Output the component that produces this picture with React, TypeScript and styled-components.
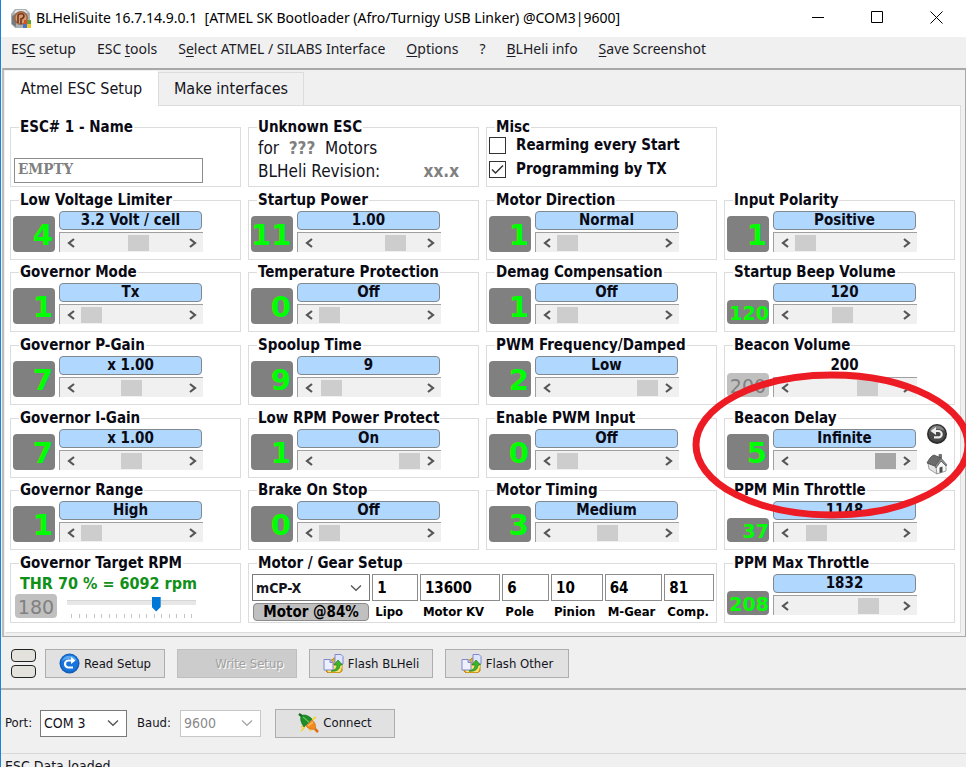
import React, { useState } from 'react';
import styled, { createGlobalStyle } from 'styled-components';

const UI = `"Noto Sans", "Open Sans", sans-serif`;
const TAHOMA = `"DejaVu Sans Condensed", "DejaVu Sans", sans-serif`;
const condensed = `font-family: ${TAHOMA};`;

const GlobalStyle = createGlobalStyle`
  *, *::before, *::after { box-sizing: border-box; }
  body { margin: 0; background: #f0f0f0; color: #000; font-family: ${UI}; }
  button, input, select { font: inherit; color: inherit; margin: 0; border-radius: 0; }
`;

const Window = styled.div`
  display: flex;
  flex-direction: column;
  height: 100vh;
  overflow: hidden;
  background: #f0f0f0;
  border-left: 1px solid #1883d7;
`;

const TitleBar = styled.header`
  display: flex;
  align-items: center;
  flex: 0 0 37px;
  padding: 0 0 2px 10px;
  background: #fff;
`;

const Title = styled.h1`
  flex: 1;
  margin: 0 0 0 5px;
  font-size: 14px;
  line-height: 20px;
  font-weight: 400;
  white-space: pre;
`;

const CaptionButton = styled.button`
  display: grid;
  place-items: center;
  width: 59px;
  height: 35px;
  padding: 0;
  border: 0;
  background: transparent;
`;

const MenuBar = styled.nav`
  display: flex;
  flex: 0 0 31px;
  gap: 21px;
  padding: 1px 10px 0;
`;

const MenuItem = styled.button`
  height: 21px;
  padding: 0;
  border: 0;
  background: transparent;
  font-size: 14px;
  line-height: 21px;
  color: #1c1c28;
  white-space: nowrap;
  u { text-underline-offset: 2px; }
`;

const Panel = styled.section`
  flex: none;
  border: solid #a8a8a8;
  border-width: 2px 1px 1px 0;
  border-left: 2px solid #bdbdbd;
  margin-left: 1px;
`;

const TabStrip = styled.div`
  display: flex;
  align-items: flex-end;
  height: 35px;
  padding-left: 1px;
`;

const Tab = styled.button<{ $active?: boolean }>`
  ${condensed}
  height: ${p => (p.$active ? 35 : 33)}px;
  width: ${p => (p.$active ? 153 : 146)}px;
  margin-bottom: ${p => (p.$active ? -1 : 0)}px;
  padding: 0;
  font-size: 16px;
  line-height: 20px;
  color: #14141c;
  background: ${p => (p.$active ? '#fff' : '#f0f0f0')};
  border: solid #dcdcdc;
  border-width: ${p => (p.$active ? '0' : '1px 1px 0 1px')};
`;

const TabPage = styled.div`
  margin: 0 4px 3px 1px;
  padding: 13px 5px 9px 4px;
  background: #fff;
  border: 1px solid #dcdcdc;
  border-left-color: #fff;
`;

const Settings = styled.div`
  display: grid;
  grid-template-columns: repeat(4, minmax(0, 1fr));
  grid-template-rows: 73px 72px 73px 73px 72px 73px 68px;
  column-gap: 7px;
  align-items: start;
`;

const Group = styled.fieldset<{ $col: number; $row: number; $span?: number }>`
  grid-column: ${p => p.$col} / span ${p => p.$span ?? 1};
  grid-row: ${p => p.$row};
  min-width: 0;
  height: 68px;
  margin: 0;
  padding: 0 2px;
  border: 1px solid #dcdcdc;
`;

const Legend = styled.legend`
  ${condensed}
  height: 16px;
  margin-left: 6px;
  padding: 0 1px;
  font-size: 15px;
  line-height: 16px;
  font-weight: 700;
  white-space: nowrap;
  color: #0a0a14;
`;

const ParamBody = styled.div`
  position: relative;
  display: grid;
  grid-template-columns: 42px minmax(0, 144px) auto;
  grid-template-rows: 41px;
  column-gap: 4px;
  padding-top: 3px;
  align-items: end;
`;

const Badge = styled.output<{ $small?: boolean; $off?: boolean }>`
  display: block;
  height: ${p => (p.$small ? 24 : 36)}px;
  width: 42px;
  padding-right: ${p => (p.$small ? 0 : 2)}px;
  border-radius: 4px;
  overflow: hidden;
  background: ${p => (p.$off ? '#c0c0c0' : '#808080')};
  color: ${p => (p.$off ? '#808080' : '#00ff00')};
  font-family: "DejaVu Sans", sans-serif;
  font-size: ${p => (p.$small ? 19 : 29)}px;
  font-weight: ${p => (p.$off ? 400 : 700)};
  line-height: ${p => (p.$small ? 26 : 38)}px;
  text-align: ${p => (p.$off ? 'center' : 'right')};
`;

const Control = styled.div`
  display: grid;
  grid-template-rows: 19px 20px;
  row-gap: 2px;
`;

const Pill = styled.output<{ $plain?: boolean }>`
  ${condensed}
  margin-right: 1px;
  border: 1px solid ${p => (p.$plain ? 'transparent' : '#808890')};
  border-radius: 4px;
  background: ${p => (p.$plain ? 'transparent' : '#b0d8ff')};
  font-size: 15px;
  line-height: 17px;
  font-weight: 700;
  text-align: center;
  color: #0a0a14;
`;

const ScrollFrame = styled.div`
  display: grid;
  grid-template-columns: 21px minmax(0, 1fr) 21px;
  border: solid #a0a0a0;
  border-width: 1px 0 0 1px;
  background: #f0f0f0;
`;

const ArrowButton = styled.button`
  display: grid;
  place-items: center;
  padding: 0;
  border: 0;
  background: transparent;
`;

const ScrollRange = styled.input<{ $held?: boolean }>`
  appearance: none;
  width: 100%;
  height: 19px;
  background: transparent;
  &::-webkit-slider-thumb {
    appearance: none;
    width: 21px;
    height: 16px;
    border: 0;
    border-radius: 0;
    background: ${p => (p.$held ? '#a6a6a6' : '#cdcdcd')};
  }
`;

const SideButtons = styled.div`
  display: flex;
  flex-direction: column;
  gap: 8px;
  margin: 0 0 -5px 5px;
`;

const IconButton = styled.button`
  display: block;
  width: 22px;
  height: 22px;
  padding: 0;
  border: 0;
  background: transparent;
  svg { display: block; }
`;

const Callout = styled.svg`
  position: absolute;
  z-index: 2;
  left: -35px;
  top: -58px;
  pointer-events: none;
`;

const NameInput = styled.input`
  display: block;
  width: 189px;
  height: 25px;
  margin: 23px 0 0 1px;
  padding: 0 3px 4px;
  border: 1px solid #8c8c8c;
  background: #fff;
  font-family: "DejaVu Serif Condensed", "DejaVu Serif", serif;
  font-size: 15px;
  font-weight: 700;
  color: #808080;
`;

const InfoLine = styled.p`
  ${condensed}
  display: flex;
  justify-content: space-between;
  width: 201px;
  margin: 0 0 0 7px;
  padding-top: 3px;
  font-size: 17px;
  line-height: 20px;
  white-space: pre;
  color: #14141c;
  b { color: #808080; }
`;

const CheckRow = styled.label`
  ${condensed}
  display: flex;
  align-items: center;
  gap: 10px;
  height: 24px;
  font-size: 15px;
  line-height: 20px;
  font-weight: 700;
  color: #0a0a14;
`;

const CheckList = styled.div`
  margin-top: -2px;
`;

const CheckCell = styled.span`
  display: grid;
  width: 17px;
  height: 17px;
  > * { grid-area: 1 / 1; }
  svg { pointer-events: none; opacity: 0; }
  input:checked + svg { opacity: 1; }
`;

const CheckBox = styled.input`
  appearance: none;
  width: 17px;
  height: 17px;
  border: 1px solid #333;
  background: #fff;
`;

const Reading = styled.p`
  ${condensed}
  margin: 3px 0 0 7px;
  font-size: 16px;
  line-height: 20px;
  font-weight: 700;
  color: #109018;
  white-space: nowrap;
`;

const TargetRow = styled.div`
  display: flex;
  gap: 10px;
  padding: 0 0 0 2px;
`;

const SliderBox = styled.div`
  width: 129px;
  padding-top: 2px;
`;

const Slider = styled.input`
  appearance: none;
  display: block;
  width: 100%;
  height: 16px;
  background: linear-gradient(#d6d6d6, #d6d6d6) 0 4px / 100% 1px no-repeat,
    linear-gradient(#e7e7e7, #e7e7e7) 0 4px / 100% 5px no-repeat;
  &::-webkit-slider-thumb {
    appearance: none;
    width: 9px;
    height: 15px;
    background: #0078d7;
    clip-path: polygon(0 0, 100% 0, 100% 70%, 50% 100%, 0 70%);
  }
`;

const Ticks = styled.div`
  display: flex;
  justify-content: space-between;
  margin: 2px 4px 0;
`;

const Tick = styled.i`
  width: 1px;
  height: 4px;
  background: #c4c4c4;
`;

const MotorGrid = styled.div`
  display: grid;
  grid-auto-flow: column;
  grid-template-columns: 119fr 46fr 81fr 47fr 52fr 58fr 50fr;
  grid-template-rows: 27px 18px;
  gap: 2px;
  margin: 3px 0 0 1px;
`;

const MotorInput = styled.input`
  ${condensed}
  width: 100%;
  min-width: 0;
  padding: 0 4px;
  border: 1px solid #8c8c8c;
  background: #fff;
  font-size: 15px;
  font-weight: 700;
`;

const MotorLabel = styled.label`
  ${condensed}
  padding-left: 3px;
  font-size: 13px;
  line-height: 18px;
  font-weight: 700;
  white-space: nowrap;
`;

const MotorButton = styled.button`
  ${condensed}
  margin: 0 1px;
  padding: 0;
  border: 1px solid #8c8c8c;
  border-radius: 4px;
  background: #c0c0c0;
  font-size: 15px;
  line-height: 16px;
  font-weight: 700;
  white-space: nowrap;
`;

const SelectBox = styled.span<{ $w?: number; $disabled?: boolean }>`
  display: grid;
  grid-template-columns: minmax(0, 1fr) 20px;
  align-items: center;
  width: ${p => (p.$w ? p.$w + 'px' : 'auto')};
  height: 27px;
  color: ${p => (p.$disabled ? '#a8a8a8' : '#555')};
  select { grid-area: 1 / 1 / 2 / 3; }
  svg { grid-area: 1 / 2; pointer-events: none; }
`;

const Select = styled.select<{ $bold?: boolean }>`
  ${condensed}
  appearance: none;
  width: 100%;
  height: 27px;
  padding: 0 3px;
  border: 1px solid #7a7a7a;
  background: #fff;
  color: #14141c;
  font-size: 14px;
  font-weight: ${p => (p.$bold ? 700 : 400)};
  &:disabled { border-color: #c8c8c8; opacity: 1; color: #8a8a8a; }
`;

const Toolbar = styled.div`
  display: flex;
  align-items: flex-start;
  gap: 12px;
  flex: 0 0 53px;
  padding: 12px 9px 0;
  border-bottom: 2px solid #b4b4b4;
`;

const Lamps = styled.div`
  display: grid;
  gap: 3px;
  margin: 0 -3px 0 1px;
`;

const Lamp = styled.button`
  width: 25px;
  height: 13px;
  padding: 0;
  border: 1px solid #222;
  border-radius: 4px;
  background: #e3e2dc;
`;

const PushButton = styled.button<{ $w: number }>`
  ${condensed}
  display: flex;
  align-items: center;
  justify-content: center;
  gap: 4px;
  width: ${p => p.$w}px;
  height: 29px;
  padding: 0;
  border: 1px solid #adadad;
  background: #e1e1e1;
  font-size: 13px;
  line-height: 18px;
  white-space: nowrap;
  color: #14141c;
  &:disabled {
    padding-left: 25px;
    border-color: #bfbfbf;
    background: #cccccc;
    color: #a0a0a0;
    text-shadow: 1px 1px 0 #fff;
  }
`;

const PortBar = styled.div`
  display: flex;
  align-items: center;
  flex: 0 0 63px;
  padding: 3px 4px 0;
`;

const PortLabel = styled.label<{ $gap?: boolean }>`
  ${condensed}
  width: ${p => (p.$gap ? 53 : 35)}px;
  padding-left: ${p => (p.$gap ? 10 : 0)}px;
  font-size: 13px;
  line-height: 18px;
  color: #14141c;
`;

const ConnectSlot = styled.div`
  margin-left: 14px;
`;

const StatusBar = styled.footer`
  ${condensed}
  flex: none;
  padding: 2px 4px;
  border-top: 1px solid #d7d7d7;
  font-size: 14px;
  line-height: 20px;
  color: #14141c;
`;

const Chevron = () => (
  <svg width="12" height="8" viewBox="0 0 12 8" fill="none" stroke="currentColor" strokeWidth="1.3" aria-hidden="true">
    <path d="M1 1.5 6 6.3 11 1.5" />
  </svg>
);

const Arrow = ({ right }: { right?: boolean }) => (
  <svg width="8" height="10" viewBox="0 0 8 10" fill="none" stroke="#555" strokeWidth="2.2" aria-hidden="true">
    <path d={right ? 'M1 1 6 5 1 9' : 'M7 1 2 5 7 9'} />
  </svg>
);

const AppIcon = () => (
  <svg width="20" height="20" viewBox="0 0 20 20" aria-hidden="true">
    <path d="M4 1h11l4 4v13l-3 2H4l-4-4V6z" fill="#a9b1b5" />
    <path d="M5 2h9l3 3H3z" fill="#dfe5e6" />
    <path d="M1 8v8l4 3V6z" fill="#757c80" />
    <circle cx="10" cy="10" r="7" fill="#9b6240" />
    <circle cx="10" cy="10" r="5.5" fill="#d79b70" />
    <path d="M7 15V8c0-3 6-3 6 0 0 3-3 3-3 2v6" fill="none" stroke="#70371e" strokeWidth="1.6" />
    <path d="M13 12h3v4h-3z" fill="#e04c29" />
    <path d="M16 12h4v4h-4z" fill="#5da532" />
    <path d="M12 16h4v4h-4z" fill="#4675c4" />
    <path d="M16 16h4v4h-4z" fill="#efc52c" />
  </svg>
);

const ReadIcon = () => (
  <svg width="21" height="21" viewBox="0 0 21 21" aria-hidden="true">
    <circle cx="10.5" cy="10.5" r="10" fill="#155cb5" />
    <circle cx="10.5" cy="10" r="8.7" fill="#1674dc" />
    <path d="M3 8a8 8 0 0 1 15 0c-4-3-10-3-15 0z" fill="#5ba8ee" />
    <path d="M14 14.5H9.5A3.5 3.5 0 0 1 9.5 7.5H13" fill="none" stroke="#fff" strokeWidth="2.2" />
    <path d="m12 4 4.5 3.500-4.5 3.500z" fill="#fff" />
  </svg>
);

const FlashIcon = () => (
  <svg width="21" height="19" viewBox="0 0 21 19" aria-hidden="true">
    <path d="M3 6h6l2-2h8v13l-3 2H5l-2-2z" fill="#e3ae28" stroke="#b98412" />
    <path d="m5 12 15-2-3 8H5z" fill="#ffe277" />
    <path d="M12 .5h6l2 2V10h-8z" fill="#dfe4ff" stroke="#7e89cf" />
    <path d="M1 5.500h6l3 3v7.500H1z" fill="#eef0ff" stroke="#7e89cf" />
    <path d="M7 5.500v3h3" fill="#b7bee9" stroke="#7e89cf" />
    <path d="M8 17c5-1 6-4 6-6h-3l4-5 4.500 5H17c0 4-3 7-9 6z" fill="#3fb52b" stroke="#1d7c17" strokeWidth=".7" />
  </svg>
);

const ConnectIcon = () => (
  <svg width="21" height="20" viewBox="0 0 21 20" aria-hidden="true">
    <path d="m3 18 4-4M14 7l4-3M3 14l3-1M13 18l-2-2" stroke="#f4d32a" strokeWidth="1.600" />
    <path d="m1 1 3.500 2.500" stroke="#146b17" strokeWidth="2.500" />
    <path d="M3 3c3-2 7-1 11 3l-8 8C3 10 2 6 3 3z" fill="#1d8d25" stroke="#136a18" strokeWidth=".6" />
    <path d="m5 4 7 6" stroke="#63c35a" strokeWidth="1.300" />
    <path d="m8 13 6-6c3 2 4 5 3.500 9-4 1-7 0-9.500-3z" fill="#f28a1d" stroke="#c96211" strokeWidth=".6" />
    <path d="m10 13 5-4" stroke="#ffc25b" strokeWidth="1.300" />
    <path d="m17 16 3 3" stroke="#dd6c14" strokeWidth="2.500" />
  </svg>
);

const UndoIcon = () => (
  <svg width="22" height="22" viewBox="0 0 22 22" aria-hidden="true">
    <circle cx="11" cy="11" r="10" fill="#2d2d2d" />
    <circle cx="11" cy="10.500" r="8.500" fill="#4a4a4a" />
    <path d="M3.500 8a8 8 0 0 1 15 0c-4-2.500-10-2.500-15 0z" fill="#858585" />
    <path d="M9 8h3.500a3.200 3.200 0 0 1 0 6.400H8" fill="none" stroke="#eee" strokeWidth="2.200" />
    <path d="m10 4-5.500 4 5.500 4z" fill="#eee" />
  </svg>
);

const HomeIcon = () => (
  <svg width="22" height="22" viewBox="0 0 22 22" aria-hidden="true">
    <path d="m2 10 9 4v7l-8-5z" fill="#e4e4e4" stroke="#8a8a8a" strokeWidth=".8" />
    <path d="m10 14 5-6 5 5v5l-9 3z" fill="#f8f8f8" stroke="#8a8a8a" strokeWidth=".8" />
    <path d="m13.500 14.500 3-1v5.500l-3 1z" fill="#4d4d4d" />
    <path d="M1 10C3 6 5 3 8 2l7 3-6 8z" fill="#6c6c6c" stroke="#4a4a4a" strokeWidth=".8" />
    <path d="m9 13 6-8 6 7-1 1-5-5-5 7z" fill="#8e8e8e" stroke="#4a4a4a" strokeWidth=".6" />
    <path d="M13 4V1.500h2.500V5z" fill="#777" stroke="#444" strokeWidth=".6" />
  </svg>
);

type Param = {
  name: string;
  code: string;
  value: string;
  at: number;
  col: number;
  row: number;
  off?: boolean;
  focus?: boolean;
};

const PARAMS: Param[] = [
  { name: 'Low Voltage Limiter', code: '4', value: '3.2 Volt / cell', at: 59, col: 1, row: 2 },
  { name: 'Startup Power', code: '11', value: '1.00', at: 82, col: 2, row: 2 },
  { name: 'Motor Direction', code: '1', value: 'Normal', at: 0, col: 3, row: 2 },
  { name: 'Input Polarity', code: '1', value: 'Positive', at: 0, col: 4, row: 2 },
  { name: 'Governor Mode', code: '1', value: 'Tx', at: 0, col: 1, row: 3 },
  { name: 'Temperature Protection', code: '0', value: 'Off', at: 0, col: 2, row: 3 },
  { name: 'Demag Compensation', code: '1', value: 'Off', at: 0, col: 3, row: 3 },
  { name: 'Startup Beep Volume', code: '120', value: '120', at: 46, col: 4, row: 3 },
  { name: 'Governor P-Gain', code: '7', value: 'x 1.00', at: 50, col: 1, row: 4 },
  { name: 'Spoolup Time', code: '9', value: '9', at: 3, col: 2, row: 4 },
  { name: 'PWM Frequency/Damped', code: '2', value: 'Low', at: 100, col: 3, row: 4 },
  { name: 'Beacon Volume', code: '200', value: '200', at: 77, col: 4, row: 4, off: true },
  { name: 'Governor I-Gain', code: '7', value: 'x 1.00', at: 50, col: 1, row: 5 },
  { name: 'Low RPM Power Protect', code: '1', value: 'On', at: 100, col: 2, row: 5 },
  { name: 'Enable PWM Input', code: '0', value: 'Off', at: 0, col: 3, row: 5 },
  { name: 'Beacon Delay', code: '5', value: 'Infinite', at: 100, col: 4, row: 5, focus: true },
  { name: 'Governor Range', code: '1', value: 'High', at: 0, col: 1, row: 6 },
  { name: 'Brake On Stop', code: '0', value: 'Off', at: 0, col: 2, row: 6 },
  { name: 'Motor Timing', code: '3', value: 'Medium', at: 50, col: 3, row: 6 },
  { name: 'PPM Min Throttle', code: '37', value: '1148', at: 14, col: 4, row: 6 },
  { name: 'PPM Max Throttle', code: '208', value: '1832', at: 79, col: 4, row: 7 },
];

const MOTOR_FIELDS = [
  ['Lipo', '1'],
  ['Motor KV', '13600'],
  ['Pole', '6'],
  ['Pinion', '10'],
  ['M-Gear', '64'],
  ['Comp.', '81'],
];

function ParamGroup({ p }: { p: Param }) {
  const [at, setAt] = useState(p.at);
  const step = (d: number) => setAt(v => Math.max(0, Math.min(100, v + d)));
  return (
    <Group $col={p.col} $row={p.row}>
      <Legend>{p.name}</Legend>
      <ParamBody>
        <Badge $small={p.code.length > 2 || p.code === '37'} $off={p.off}>{p.code}</Badge>
        <Control>
          <Pill $plain={p.off}>{p.value}</Pill>
          <ScrollFrame>
            <ArrowButton aria-label={`Decrease ${p.name}`} onClick={() => step(-10)}><Arrow /></ArrowButton>
            <ScrollRange
              type="range"
              aria-label={p.name}
              $held={p.focus}
              value={at}
              onChange={e => setAt(Number(e.target.value))}
            />
            <ArrowButton aria-label={`Increase ${p.name}`} onClick={() => step(10)}><Arrow right /></ArrowButton>
          </ScrollFrame>
        </Control>
        {p.focus && (
          <>
            <SideButtons>
              <IconButton aria-label="Undo"><UndoIcon /></IconButton>
              <IconButton aria-label="Default"><HomeIcon /></IconButton>
            </SideButtons>
            <Callout width="280" height="154" viewBox="0 0 280 154" aria-hidden="true">
              <ellipse cx="140" cy="77" rx="136" ry="70" fill="none" stroke="#ed1c24" strokeWidth="7" />
            </Callout>
          </>
        )}
      </ParamBody>
    </Group>
  );
}

export default function App() {
  return (
    <>
      <GlobalStyle />
      <Window>
        <TitleBar>
          <AppIcon />
          <Title>{'BLHeliSuite 16.7.14.9.0.1  [ATMEL SK Bootloader (Afro/Turnigy USB Linker) @COM3|9600]'}</Title>
          <CaptionButton aria-label="Minimize">
            <svg width="13" height="13" viewBox="0 0 13 13" stroke="#000"><path d="M0 6.500h12" /></svg>
          </CaptionButton>
          <CaptionButton aria-label="Maximize">
            <svg width="13" height="13" viewBox="0 0 13 13" stroke="#000" fill="none"><path d="M.5 .5h11v11H.5z" /></svg>
          </CaptionButton>
          <CaptionButton aria-label="Close">
            <svg width="13" height="13" viewBox="0 0 13 13" stroke="#000"><path d="m.5 .5 12 12m0-12-12 12" /></svg>
          </CaptionButton>
        </TitleBar>

        <MenuBar>
          <MenuItem>ES<u>C</u> setup</MenuItem>
          <MenuItem>ESC <u>t</u>ools</MenuItem>
          <MenuItem>S<u>e</u>lect ATMEL / SILABS Interface</MenuItem>
          <MenuItem><u>O</u>ptions</MenuItem>
          <MenuItem>?</MenuItem>
          <MenuItem><u>B</u>LHeli info</MenuItem>
          <MenuItem><u>S</u>ave Screenshot</MenuItem>
        </MenuBar>

        <Panel>
          <TabStrip role="tablist">
            <Tab $active role="tab" aria-selected="true">Atmel ESC Setup</Tab>
            <Tab role="tab" aria-selected="false">Make interfaces</Tab>
          </TabStrip>
          <TabPage role="tabpanel">
            <Settings>
              <Group $col={1} $row={1}>
                <Legend>ESC# 1 - Name</Legend>
                <NameInput aria-label="ESC name" defaultValue="EMPTY" />
              </Group>
              <Group $col={2} $row={1}>
                <Legend>Unknown ESC</Legend>
                <InfoLine><span>for  <b>???</b>  Motors</span></InfoLine>
                <InfoLine><span>BLHeli Revision:</span><b>xx.x</b></InfoLine>
              </Group>
              <Group $col={3} $row={1}>
                <Legend>Misc</Legend>
                <CheckList>
                  {['Rearming every Start', 'Programming by TX'].map((text, i) => (
                    <CheckRow key={text}>
                      <CheckCell>
                        <CheckBox type="checkbox" defaultChecked={i === 1} />
                        <svg width="17" height="17" viewBox="0 0 17 17" fill="none" stroke="#333" strokeWidth="1.500" aria-hidden="true">
                          <path d="m3 8.500 3.500 3.500L14 4.500" />
                        </svg>
                      </CheckCell>
                      {text}
                    </CheckRow>
                  ))}
                </CheckList>
              </Group>

              {PARAMS.map(p => <ParamGroup key={p.name} p={p} />)}

              <Group $col={1} $row={7}>
                <Legend>Governor Target RPM</Legend>
                <Reading>THR 70 % = 6092 rpm</Reading>
                <TargetRow>
                  <Badge $small $off>180</Badge>
                  <SliderBox>
                    <Slider type="range" aria-label="Governor Target RPM" min={0} max={255} defaultValue={180} />
                    <Ticks>{Array.from({ length: 17 }, (_, i) => <Tick key={i} />)}</Ticks>
                  </SliderBox>
                </TargetRow>
              </Group>

              <Group $col={2} $row={7} $span={2}>
                <Legend>Motor / Gear Setup</Legend>
                <MotorGrid>
                  <SelectBox>
                    <Select $bold aria-label="Model" defaultValue="mCP-X"><option>mCP-X</option></Select>
                    <Chevron />
                  </SelectBox>
                  <MotorButton>Motor @84%</MotorButton>
                  {MOTOR_FIELDS.map(([label, value]) => (
                    <React.Fragment key={label}>
                      <MotorInput id={label} defaultValue={value} />
                      <MotorLabel htmlFor={label}>{label}</MotorLabel>
                    </React.Fragment>
                  ))}
                </MotorGrid>
              </Group>
            </Settings>
          </TabPage>
        </Panel>

        <Toolbar>
          <Lamps>
            <Lamp aria-label="Port status" />
            <Lamp aria-label="ESC status" />
          </Lamps>
          <PushButton $w={120}><ReadIcon />Read Setup</PushButton>
          <PushButton $w={120} disabled>Write Setup</PushButton>
          <PushButton $w={124}><FlashIcon />Flash BLHeli</PushButton>
          <PushButton $w={124}><FlashIcon />Flash Other</PushButton>
        </Toolbar>

        <PortBar>
          <PortLabel htmlFor="port">Port:</PortLabel>
          <SelectBox $w={87}>
            <Select id="port" defaultValue="COM 3"><option>COM 3</option></Select>
            <Chevron />
          </SelectBox>
          <PortLabel htmlFor="baud" $gap>Baud:</PortLabel>
          <SelectBox $w={81} $disabled>
            <Select id="baud" disabled defaultValue="9600"><option>9600</option></Select>
            <Chevron />
          </SelectBox>
          <ConnectSlot>
            <PushButton $w={120}><ConnectIcon />Connect</PushButton>
          </ConnectSlot>
        </PortBar>

        <StatusBar>ESC Data loaded</StatusBar>
      </Window>
    </>
  );
}
